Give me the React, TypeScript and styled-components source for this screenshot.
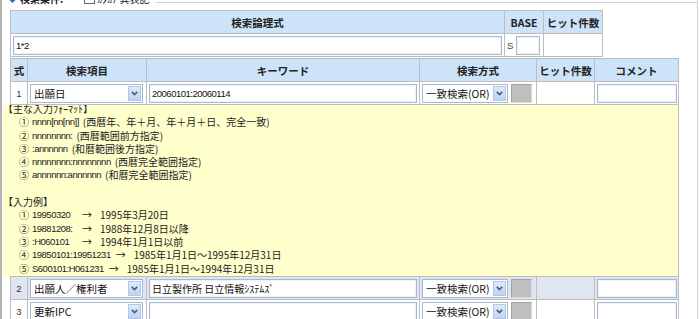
import styled, { createGlobalStyle } from "styled-components";

const LATIN = `"Liberation Sans", "Noto Sans CJK JP", sans-serif`;
const GOTHIC = `"Noto Sans CJK JP", "Liberation Sans", sans-serif`;

const GlobalStyle = createGlobalStyle`
  html, body {
    margin: 0;
    padding: 0;
    background: #fff;
    overflow: hidden;
  }
  body {
    font-family: ${GOTHIC};
    font-size: 10px;
    color: #222;
  }
`;

const Frame = styled.div`
  width: 698px;
  box-sizing: border-box;
  border-left: 2px solid #b3b3b3;
  border-right: 1px solid #d2d2d2;
  padding-left: 1px;
  padding-bottom: 20px;
`;

const LegendBar = styled.div`
    display: flex;
    align-items: flex-start;
    height: 14px;
    margin-top: -9px;
`;

const Legend = styled.div`
    display: flex;
    align-items: center;
    height: 14px;
    padding-left: 5px;
    gap: 3px;
    white-space: nowrap;
`;

const LegendTitle = styled.span`
    font-weight: 700;
    font-size: 10px;
`;

const CheckLabel = styled.label`
    display: flex;
    align-items: center;
    gap: 2px;
    margin-left: 18px;
    font-size: 10px;
`;

const CheckBox = styled.span`
    width: 9px;
    height: 9px;
    border: 1px solid #666;
    background: #fff;
`;

const Rule = styled.div`
    flex: 1;
    margin: 11px 0 0 6px;
    border-top: 1px solid #d2d2d2;
`;

const Table = styled.div<{ $cols: string; $mt?: number }>`
    display: grid;
    grid-template-columns: ${(p) => p.$cols};
    grid-auto-rows: 22px;
    gap: 1px;
    width: max-content;
    margin: ${(p) => p.$mt ?? 0}px 0 0 7px;
    background: #bdbdbd;
    border: 1px solid #bdbdbd;
`;

const HeadCell = styled.div`
    background: #cde3f9;
    display: flex;
    align-items: center;
    justify-content: center;
    font-family: ${GOTHIC};
    font-weight: 700;
    font-size: 10.5px;
    color: #222;
    white-space: nowrap;
`;

const Cell = styled.div<{ $hl?: boolean; $center?: boolean }>`
    background: ${(p) => (p.$hl ? "#dfe6ef" : "#fff")};
    display: flex;
    align-items: center;
    justify-content: ${(p) => (p.$center ? "center" : "flex-start")};
    gap: 3px;
    padding: 0 2px;
    min-width: 0;
`;

const No = styled.span`
    font-family: ${LATIN};
    font-size: 9.5px;
    color: #333;
`;

const TextBox = styled.input<{ $w: number; $cjk?: boolean }>`
    width: ${(p) => p.$w}px;
    height: 19px;
    box-sizing: border-box;
    margin: 0;
    padding: 0 2px;
    border: 1px solid #a6b9d3;
    box-shadow: inset 0 0 0 1px #eef2f7;
    background: #fff;
    font-family: ${(p) => (p.$cjk ? GOTHIC : LATIN)};
    font-size: ${(p) => (p.$cjk ? 10 : 9.5)}px;
    letter-spacing: ${(p) => (p.$cjk ? 0 : -0.5)}px;
    color: #111;
    outline: none;
`;

const BaseMark = styled.span`
    font-family: ${LATIN};
    font-size: 9.5px;
    color: #444;
`;

const SelectBox = styled.div<{ $w: number }>`
    width: ${(p) => p.$w}px;
    height: 19px;
    box-sizing: border-box;
    border: 1px solid #a6b9d3;
    background: #fff;
    display: flex;
    align-items: center;
    justify-content: space-between;
    padding: 0 1px 0 3px;
    font-family: ${GOTHIC};
    font-size: 10.5px;
    color: #111;
    white-space: nowrap;
`;

const SelectButton = styled.span`
    width: 13px;
    height: 15px;
    box-sizing: border-box;
    border: 1px solid #b2c7e8;
    background: linear-gradient(#e0eaf9, #bfd3f1);
    display: flex;
    align-items: center;
    justify-content: center;
`;

const GreyKey = styled.span`
    width: 21px;
    height: 19px;
    box-sizing: border-box;
    background: #bfbfbf;
    border: 1px solid;
    border-color: #a3a3a3 #d9d9d9 #d9d9d9 #a3a3a3;
`;

const Help = styled.div`
    display: flex;
    flex-direction: column;
    width: 676px;
    height: 171px;
    box-sizing: border-box;
    background: #ffffcc;
    border-right: 1px solid #bdbdbd;
    font-size: 10px;
    line-height: 13.3px;
    overflow: hidden;
`;

const HelpBody = styled.div`
    margin-top: -3px;
`;

const HelpTitle = styled.div<{ $gap?: boolean }>`
    height: 13.3px;
    margin-top: ${(p) => (p.$gap ? 13.3 : 0)}px;
    white-space: nowrap;
`;

const HelpLine = styled.div`
    display: flex;
    align-items: center;
    height: 13.3px;
    padding-left: 16px;
    white-space: pre;
`;

const Marker = styled.span`
    width: 12px;
`;

const Code = styled.span<{ $min?: number }>`
    font-family: ${LATIN};
    font-size: 9.5px;
    letter-spacing: -0.5px;
    margin-left: 1px;
    min-width: ${(p) => p.$min ?? 0}px;
`;

const Note = styled.span`
    margin-left: 4px;
`;

const Arrow = styled.span`
    margin: 0 8px 0 5px;
`;

const Chevron = () => (
    <svg width="7" height="5" viewBox="0 0 7 5">
        <polyline points="0.8,0.9 3.5,3.6 6.2,0.9" fill="none" stroke="#4a5d80" strokeWidth="1.6" />
    </svg>
);

const Select = ({ w, children }: { w: number; children: string }) => (
    <SelectBox $w={w}>
        <span>{children}</span>
        <SelectButton>
            <Chevron />
        </SelectButton>
    </SelectBox>
);

type RowData = { no: number; item: string; keyword: string; cjk?: boolean; hl?: boolean };

const SearchRow = ({ no, item, keyword, cjk, hl }: RowData) => (
    <>
        <Cell $hl={hl} $center>
            <No>{no}</No>
        </Cell>
        <Cell $hl={hl}>
            <Select w={113}>{item}</Select>
        </Cell>
        <Cell $hl={hl}>
            <TextBox $w={268} $cjk={cjk} defaultValue={keyword} />
        </Cell>
        <Cell $hl={hl}>
            <Select w={86}>一致検索(OR)</Select>
            <GreyKey />
        </Cell>
        <Cell $hl={hl} />
        <Cell $hl={hl}>
            <TextBox $w={80} />
        </Cell>
    </>
);

const formats = [
    ["①", "nnnn[nn[nn]]", "(西暦年、年＋月、年＋月＋日、完全一致)"],
    ["②", "nnnnnnnn:", "(西暦範囲前方指定)"],
    ["③", ":annnnnn", "(和暦範囲後方指定)"],
    ["④", "nnnnnnnn:nnnnnnnn", "(西暦完全範囲指定)"],
    ["⑤", "annnnnn:annnnnn", "(和暦完全範囲指定)"],
];

const examples = [
    ["①", "19950320", "1995年3月20日", 45],
    ["②", "19881208:", "1988年12月8日以降", 45],
    ["③", ":H060101", "1994年1月1日以前", 45],
    ["④", "19850101:19951231", "1985年1月1日～1995年12月31日", 0],
    ["⑤", "S600101:H061231", "1985年1月1日～1994年12月31日", 0],
] as const;

const COLS2 = "16px 118px 272px 116px 57px 83px";

export default function App() {
    return (
        <>
            <GlobalStyle />
            <Frame>
                <LegendBar>
                    <Legend>
                        <svg width="9" height="9" viewBox="0 0 9 9">
                            <path d="M4.5 0 L9 4.5 L4.5 9 L0 4.5 Z" fill="#2d6bd2" />
                        </svg>
                        <LegendTitle>検索条件:</LegendTitle>
                        <CheckLabel>
                            <CheckBox />
                            ｶﾀｶﾅ 異表記
                        </CheckLabel>
                    </Legend>
                    <Rule />
                </LegendBar>

                <Table $cols="493px 38px 58px" $mt={5}>
                    <HeadCell>検索論理式</HeadCell>
                    <HeadCell>BASE</HeadCell>
                    <HeadCell>ヒット件数</HeadCell>
                    <Cell>
                        <TextBox $w={489} defaultValue="1*2" />
                    </Cell>
                    <Cell>
                        <BaseMark>S</BaseMark>
                        <TextBox $w={24} />
                    </Cell>
                    <Cell />
                </Table>

                <Table $cols={COLS2} $mt={1}>
                    <HeadCell>式</HeadCell>
                    <HeadCell>検索項目</HeadCell>
                    <HeadCell>キーワード</HeadCell>
                    <HeadCell>検索方式</HeadCell>
                    <HeadCell>ヒット件数</HeadCell>
                    <HeadCell>コメント</HeadCell>
                    <SearchRow no={1} item="出願日" keyword="20060101:20060114" />
                </Table>

                <Help>
                    <HelpBody>
                        <HelpTitle>【主な入力ﾌｫｰﾏｯﾄ】</HelpTitle>
                        {formats.map(([m, code, note]) => (
                            <HelpLine key={m}>
                                <Marker>{m}</Marker>
                                <Code>{code}</Code>
                                <Note>{note}</Note>
                            </HelpLine>
                        ))}
                        <HelpTitle $gap>【入力例】</HelpTitle>
                        {examples.map(([m, code, result, min]) => (
                            <HelpLine key={m}>
                                <Marker>{m}</Marker>
                                <Code $min={min}>{code}</Code>
                                <Arrow>→</Arrow>
                                <span>{result}</span>
                            </HelpLine>
                        ))}
                    </HelpBody>
                </Help>

                <Table $cols={COLS2}>
                    <SearchRow no={2} item="出願人／権利者" keyword="日立製作所 日立情報ｼｽﾃﾑｽﾞ" cjk hl />
                    <SearchRow no={3} item="更新IPC" keyword="" />
                </Table>
            </Frame>
        </>
    );
}
